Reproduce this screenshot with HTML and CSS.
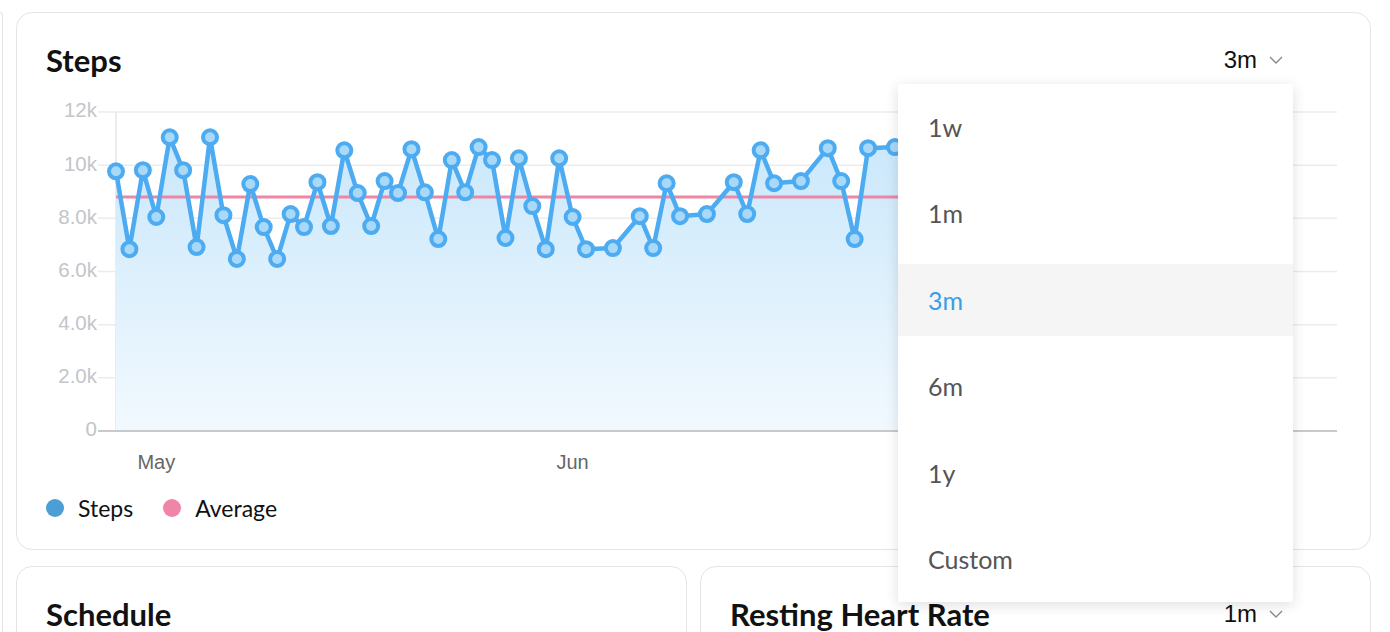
FILE: index.html
```html
<!DOCTYPE html>
<html lang="en">
<head>
    <meta charset="UTF-8">
    <meta name="viewport" content="width=device-width, initial-scale=1.0">
    <title>Health Dashboard</title>
    <link rel="stylesheet" href="styles.css">
</head>
<body>
  <div class="page">
    <!-- previous column, scrolled mostly out of view -->
    <div class="edge-card"></div>

    <main class="dashboard">
      <!-- Steps -->
      <section class="card steps-card">
        <header class="card-head">
          <h2>Steps</h2>
          <button class="range">3m
            <svg width="14" height="8" viewBox="0 0 14 8"><path d="M1 1l6 6 6-6" /></svg>
          </button>
        </header>

        <svg id="stepsChart" class="chart" width="1295" height="384"></svg>

        <ul class="legend">
          <li><span class="dot dot-steps"></span>Steps</li>
          <li><span class="dot dot-average"></span>Average</li>
        </ul>

        <ul class="range-menu">
          <li>1w</li>
          <li>1m</li>
          <li class="active">3m</li>
          <li>6m</li>
          <li>1y</li>
          <li>Custom</li>
        </ul>
      </section>

      <div class="card-row">
        <section class="card">
          <header class="card-head">
            <h2>Schedule</h2>
          </header>
        </section>
        <section class="card">
          <header class="card-head">
            <h2>Resting Heart Rate</h2>
            <button class="range">1m
              <svg width="14" height="8" viewBox="0 0 14 8"><path d="M1 1l6 6 6-6" /></svg>
            </button>
          </header>
        </section>
      </div>
    </main>
  </div>

  <script>
    // [day since Apr 28, steps]
    const steps = [
      [0, 9770], [1, 6840], [2, 9810], [3, 8050], [4, 11050], [5, 9810], [6, 6920],
      [7, 11050], [8, 8120], [9, 6470], [10, 9290], [11, 7670], [12, 6470], [13, 8160],
      [14, 7670], [15, 9360], [16, 7710], [17, 10560], [18, 8950], [19, 7710], [20, 9400],
      [21, 8950], [22, 10600], [23, 8980], [24, 7220], [25, 10190], [26, 8980], [27, 10680],
      [28, 10190], [29, 7260], [30, 10260], [31, 8460], [32, 6840], [33, 10260], [34, 8050],
      [35, 6840], [37, 6880], [39, 8080], [40, 6880], [41, 9320], [42, 8080], [44, 8160],
      [46, 9360], [47, 8160], [48, 10560], [49, 9320], [51, 9400], [53, 10640], [54, 9400],
      [55, 7220], [56, 10640], [58, 10680], [59, 10400], [60, 8900], [61, 9700], [62, 7400],
      [64, 10100], [65, 8300], [66, 9900], [68, 7600], [69, 10300], [70, 8800], [72, 9500],
      [73, 7100], [74, 10200], [76, 8600], [77, 9900], [79, 8200], [80, 10500], [82, 7800],
      [83, 9600], [85, 8700], [86, 9300]
    ];
    const average = 8800;

    const chart = document.getElementById("stepsChart");
    const NS = "http://www.w3.org/2000/svg";

    const plotLeft = 70, plotRight = 1291, plotTop = 16, plotBottom = 335;
    const dayWidth = 13.43;
    const maxSteps = 12000;

    const xAt = d => plotLeft + d * dayWidth;
    const yAt = v => plotBottom - v / maxSteps * (plotBottom - plotTop);

    function add(tag, attrs, text) {
      const el = document.createElementNS(NS, tag);
      for (const k in attrs) el.setAttribute(k, attrs[k]);
      if (text !== undefined) el.textContent = text;
      chart.appendChild(el);
      return el;
    }

    // fill gradient
    const defs = add("defs", {});
    const grad = document.createElementNS(NS, "linearGradient");
    grad.setAttribute("id", "stepsFill");
    grad.setAttribute("gradientUnits", "userSpaceOnUse");
    grad.setAttribute("x1", 0); grad.setAttribute("y1", plotTop);
    grad.setAttribute("x2", 0); grad.setAttribute("y2", plotBottom);
    grad.innerHTML = '<stop offset="0" stop-color="#c6e6fb"/><stop offset="1" stop-color="#f2f9fe"/>';
    defs.appendChild(grad);

    // grid + y labels
    const yLabels = ["0", "2.0k", "4.0k", "6.0k", "8.0k", "10k", "12k"];
    yLabels.forEach((label, i) => {
      const y = yAt(i * 2000);
      if (i > 0) add("line", { x1: 52, x2: plotRight, y1: y, y2: y, class: "grid" });
      add("text", { x: 51, y: y, class: "y-label" }, label);
    });
    add("line", { x1: plotLeft, x2: plotLeft, y1: plotTop, y2: plotBottom, class: "axis-y" });

    // area under the line
    const pts = steps.map(([d, v]) => [xAt(d), yAt(v)]);
    const line = pts.map((p, i) => (i ? "L" : "M") + p[0].toFixed(1) + " " + p[1].toFixed(1)).join(" ");
    const lastX = pts[pts.length - 1][0];
    add("path", { d: `${line} L${lastX.toFixed(1)} ${plotBottom} L${pts[0][0]} ${plotBottom} Z`, fill: "url(#stepsFill)" });

    add("line", { x1: 52, x2: plotRight, y1: plotBottom, y2: plotBottom, class: "axis-x" });

    // average
    add("line", { x1: plotLeft, x2: lastX, y1: yAt(average), y2: yAt(average), class: "avg-line" });

    // steps line + points
    add("path", { d: line, class: "steps-line" });
    pts.forEach(p => add("circle", { cx: p[0], cy: p[1], r: 7, class: "steps-point" }));

    // months
    [["May", 3], ["Jun", 34], ["Jul", 64]].forEach(([m, d]) => {
      add("text", { x: xAt(d), y: 368, class: "x-label" }, m);
    });
  </script>
</body>
</html>
```

FILE: styles.css
```css
/* Global Styles */
body {
    margin: 0;
    padding: 0;
    background: #fff;
    font-family: Lato, "Noto Sans", sans-serif;
    color: #111;
}

.page {
    display: flex;
    gap: 13px;
    padding: 12px 19px 0 0;
}

.edge-card {
    width: 2px;
    min-height: 700px;
    border: 1px solid #e3e3e3;
    border-left: none;
    border-radius: 0 10px 0 0;
}

.dashboard {
    flex: 1;
    display: flex;
    flex-direction: column;
    gap: 16px;
}

.card-row {
    display: grid;
    grid-template-columns: 1fr 1fr;
    gap: 13px;
}

/* Cards */
.card {
    background: #fff;
    border: 1px solid #e4e4e4;
    border-radius: 16px;
    padding: 29px 29px 27px;
}

.card-row .card {
    min-height: 200px;
}

.steps-card {
    position: relative;
}

.card-head {
    display: flex;
    justify-content: space-between;
    align-items: center;
    height: 36px;
}

.card-head h2 {
    margin: 0;
    font-size: 31px;
    font-weight: 700;
    line-height: 36px;
}

.range {
    display: flex;
    align-items: center;
    gap: 12px;
    margin-right: 58px;
    padding: 0;
    border: none;
    background: none;
    font-family: "Liberation Sans", Arial, sans-serif;
    font-size: 24px;
    color: #111;
    cursor: pointer;
}

.range svg path {
    fill: none;
    stroke: #8a8a8a;
    stroke-width: 1.4;
}

/* Chart */
.chart {
    display: block;
    margin-top: 18px;
    font-family: "Liberation Sans", Arial, sans-serif;
}

.chart .grid {
    stroke: #ececec;
    stroke-width: 1.5;
}

.chart .axis-y {
    stroke: #e6e6e6;
    stroke-width: 1.5;
}

.chart .axis-x {
    stroke: #c9c9c9;
    stroke-width: 2;
}

.chart .y-label {
    font-size: 20.5px;
    fill: #c3c5ca;
    text-anchor: end;
    dominant-baseline: middle;
}

.chart .x-label {
    font-size: 20px;
    fill: #666;
    text-anchor: middle;
    dominant-baseline: middle;
}

.chart .avg-line {
    stroke: #ee86a6;
    stroke-width: 3;
}

.chart .steps-line {
    fill: none;
    stroke: #4dabf1;
    stroke-width: 4.5;
    stroke-linejoin: round;
}

.chart .steps-point {
    fill: #a8d9f8;
    stroke: #4dabf1;
    stroke-width: 4;
}

/* Legend */
.legend {
    display: flex;
    gap: 30px;
    margin: 14px 0 0;
    padding: 0;
    list-style: none;
    height: 28px;
    font-size: 23px;
}

.legend li {
    display: flex;
    align-items: center;
    gap: 14px;
}

.dot {
    width: 18px;
    height: 18px;
    border-radius: 50%;
}

.dot-steps {
    background: #4b9fd6;
}

.dot-average {
    background: #ef86a8;
}

/* Range dropdown */
.range-menu {
    position: absolute;
    top: 71px;
    right: 77px;
    z-index: 10;
    display: flex;
    flex-direction: column;
    gap: 14.4px;
    width: 395px;
    margin: 0;
    padding: 7px 0;
    list-style: none;
    background: #fff;
    border-radius: 2px;
    box-shadow: 0 3px 14px rgba(0, 0, 0, 0.13);
}

.range-menu li {
    display: flex;
    align-items: center;
    height: 72px;
    padding-left: 30px;
    font-size: 25px;
    color: #555;
    cursor: pointer;
}

.range-menu li.active {
    background: #f5f5f5;
    color: #3b9de8;
}
```
